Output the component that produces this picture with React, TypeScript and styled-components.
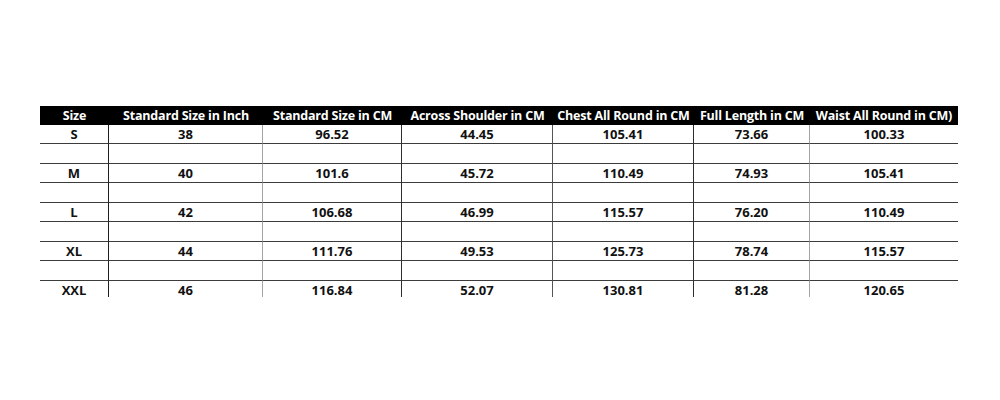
import React from 'react';
import styled, { createGlobalStyle } from 'styled-components';

const GlobalStyle = createGlobalStyle`
  html, body {
    margin: 0;
    padding: 0;
    background: #ffffff;
  }
  body {
    font-family: "Open Sans", Lato, "Liberation Sans", sans-serif;
  }
`;

const Page = styled.div`
  width: 1000px;
  height: 400px;
  padding: 106px 0 0 40px;
  box-sizing: border-box;
  background: #ffffff;
`;

const Clip = styled.div`
  width: 918px;
  height: 191px;
  overflow: hidden;
`;

const Table = styled.table`
  width: 918px;
  table-layout: fixed;
  border-collapse: separate;
  border-spacing: 0;
  font-size: 13px;
  font-weight: 700;
  color: #111111;
`;

const HeadCell = styled.th<{ $w: number }>`
  width: ${p => p.$w}px;
  height: 19px;
  padding: 0;
  background: #000000;
  color: #ffffff;
  font-size: 12.5px;
  font-weight: 700;
  text-align: center;
  white-space: nowrap;
  line-height: 19px;
  letter-spacing: -0.2px;
`;

const Cell = styled.td<{ $edge?: string; $h: number }>`
  height: ${p => p.$h}px;
  padding: 0;
  text-align: center;
  line-height: 1;
  box-sizing: border-box;
  border-bottom: 1px solid #3c3c3c;
  border-right: ${p => (p.$edge ? `1px solid ${p.$edge}` : 'none')};
`;

const columns = [
  { label: 'Size', w: 69 },
  { label: 'Standard Size in Inch', w: 154 },
  { label: 'Standard Size in CM', w: 139 },
  { label: 'Across Shoulder in CM', w: 151 },
  { label: 'Chest All Round in CM', w: 141 },
  { label: 'Full Length in CM', w: 116 },
  { label: 'Waist All Round in CM)', w: 148 },
];

// colour of the line on the right edge of each column
const edges = ['#1e1e1e', '#a3a3a3', '#2e2e2e', '#555555', '#2e2e2e', '#a3a3a3', ''];

const sizes = [
  ['S', '38', '96.52', '44.45', '105.41', '73.66', '100.33'],
  ['M', '40', '101.6', '45.72', '110.49', '74.93', '105.41'],
  ['L', '42', '106.68', '46.99', '115.57', '76.20', '110.49'],
  ['XL', '44', '111.76', '49.53', '125.73', '78.74', '115.57'],
  ['XXL', '46', '116.84', '52.07', '130.81', '81.28', '120.65'],
];

const App = () => {
  const rows: string[][] = [];
  sizes.forEach((s, i) => {
    rows.push(s);
    if (i < sizes.length - 1) rows.push(['', '', '', '', '', '', '']);
  });

  return (
    <>
      <GlobalStyle />
      <Page>
        <Clip>
          <Table>
            <thead>
              <tr>
                {columns.map(c => (
                  <HeadCell key={c.label} $w={c.w}>
                    {c.label}
                  </HeadCell>
                ))}
              </tr>
            </thead>
            <tbody>
              {rows.map((r, i) => (
                <tr key={i}>
                  {r.map((v, j) => (
                    <Cell key={j} $edge={edges[j]} $h={i % 2 === 0 ? 19 : 20}>
                      {v}
                    </Cell>
                  ))}
                </tr>
              ))}
            </tbody>
          </Table>
        </Clip>
      </Page>
    </>
  );
};

export default App;
